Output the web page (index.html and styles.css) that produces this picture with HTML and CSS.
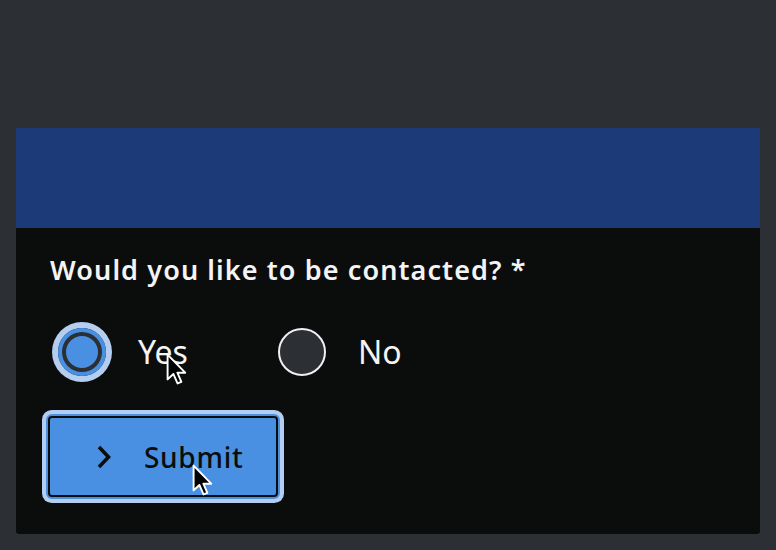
FILE: index.html
```html
<!DOCTYPE html>
<html lang="en">
<head>
<meta charset="utf-8">
<title>Contact preference</title>
<link rel="stylesheet" href="styles.css">
</head>
<body>
<div class="card">
  <div class="card-header"></div>
  <div class="card-body">
    <div class="question">Would you like to be contacted? *</div>
    <div class="options">
      <div class="option">
        <span class="radio radio-checked"></span>
        <span class="label">Yes</span>
        <svg class="cursor cursor-yes" viewBox="0 0 15 20" width="24" height="32"><path d="M1,1 L1,16.5 L4.6,13.1 L7.2,19 L9.6,18 L7.1,12.3 L12,12.3 Z" fill="#000" stroke="#fff" stroke-width="1.2" stroke-linejoin="round"/></svg>
      </div>
      <div class="option">
        <span class="radio"></span>
        <span class="label">No</span>
      </div>
    </div>
    <div class="button-row">
      <button class="submit" type="button">
        <svg class="chevron" viewBox="0 0 16 26" width="16" height="26"><polyline points="3,3 12.5,13 3,23" fill="none" stroke="#0b0d0d" stroke-width="3.6"/></svg>
        <span>Submit</span>
        <svg class="cursor cursor-btn" viewBox="0 0 15 20" width="24" height="32"><path d="M1,1 L1,16.5 L4.6,13.1 L7.2,19 L9.6,18 L7.1,12.3 L12,12.3 Z" fill="#000" stroke="#fff" stroke-width="1.2" stroke-linejoin="round"/></svg>
      </button>
    </div>
  </div>
</div>
</body>
</html>
```

FILE: styles.css
```css
html, body {
  margin: 0;
  padding: 0;
}
body {
  background: #2c2f33;
  padding: 128px 16px 0 16px;
  font-family: "Noto Sans", "Open Sans", sans-serif;
  height: 550px;
  box-sizing: border-box;
  overflow: hidden;
}
.card {
  background: #0b0d0d;
  border-radius: 0 0 3px 3px;
  overflow: hidden;
}
.card-header {
  height: 100px;
  background: #1c3a78;
}
.card-body {
  padding: 26px 32px 37px 32px;
}
.question {
  color: #f4f4f4;
  font-size: 27px;
  font-weight: 600;
  line-height: 32px;
  margin-left: 2px;
  letter-spacing: 1.1px;
}
.options {
  display: flex;
  align-items: center;
  margin: 42px 0 0 10px;
}
.option {
  display: flex;
  align-items: center;
  gap: 32px;
  position: relative;
  height: 48px;
}
.option + .option {
  margin-left: 90px;
}
.radio {
  width: 48px;
  height: 48px;
  box-sizing: border-box;
  border-radius: 50%;
  border: 2px solid #f0f0f0;
  background: #2c2f33;
}
.radio-checked {
  border: none;
  background: #4a90e2;
  box-shadow: inset 0 0 0 4px #4a90e2, inset 0 0 0 8px #2c2f33, 0 0 0 6px #b5cdef;
}
.label {
  color: #f4f4f4;
  font-size: 32px;
  line-height: 48px;
}
.button-row {
  margin-top: 40px;
  display: flex;
}
.submit {
  position: relative;
  width: 230px;
  height: 81px;
  box-sizing: border-box;
  border: 2px solid #0b0d0d;
  border-radius: 4px;
  background: #4a90e2;
  box-shadow: 0 0 0 2px #4a90e2, 0 0 0 6px #b5cdef;
  display: flex;
  align-items: center;
  padding: 0 0 0 46px;
  gap: 32px;
  font-family: "Noto Sans", "Open Sans", sans-serif;
  font-size: 28px;
  font-weight: 500;
  color: #0b0d0d;
  letter-spacing: 0.7px;
}
.chevron {
  display: block;
}
.cursor {
  position: absolute;
  display: block;
}
.cursor-yes {
  left: 108px;
  top: 25px;
}
.cursor-btn {
  left: 142px;
  top: 46px;
}
```
